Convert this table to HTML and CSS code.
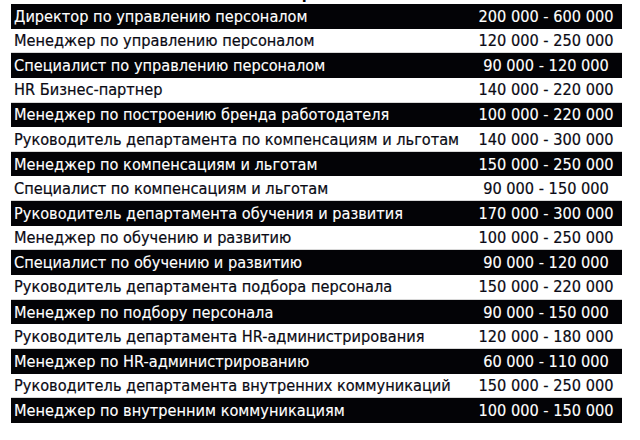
FILE: index.html
```html
<!DOCTYPE html>
<html lang="ru">
<head>
<meta charset="utf-8">
<link rel="stylesheet" href="styles.css">
</head>
<body>
<div class="page">
  <div class="title"><span>Заработная плата</span></div>
  <div class="table">
    <div class="row dark"><div class="name">Директор по управлению персоналом</div><div class="sum">200 000 - 600 000</div></div>
    <div class="row light"><div class="name">Менеджер по управлению персоналом</div><div class="sum">120 000 - 250 000</div></div>
    <div class="row dark"><div class="name">Специалист по управлению персоналом</div><div class="sum">90 000 - 120 000</div></div>
    <div class="row light"><div class="name">HR Бизнес-партнер</div><div class="sum">140 000 - 220 000</div></div>
    <div class="row dark"><div class="name">Менеджер по построению бренда работодателя</div><div class="sum">100 000 - 220 000</div></div>
    <div class="row light"><div class="name">Руководитель департамента по компенсациям и льготам</div><div class="sum">140 000 - 300 000</div></div>
    <div class="row dark"><div class="name">Менеджер по компенсациям и льготам</div><div class="sum">150 000 - 250 000</div></div>
    <div class="row light"><div class="name">Специалист по компенсациям и льготам</div><div class="sum">90 000 - 150 000</div></div>
    <div class="row dark"><div class="name">Руководитель департамента обучения и развития</div><div class="sum">170 000 - 300 000</div></div>
    <div class="row light"><div class="name">Менеджер по обучению и развитию</div><div class="sum">100 000 - 250 000</div></div>
    <div class="row dark"><div class="name">Специалист по обучению и развитию</div><div class="sum">90 000 - 120 000</div></div>
    <div class="row light"><div class="name">Руководитель департамента подбора персонала</div><div class="sum">150 000 - 220 000</div></div>
    <div class="row dark"><div class="name">Менеджер по подбору персонала</div><div class="sum">90 000 - 150 000</div></div>
    <div class="row light"><div class="name">Руководитель департамента HR-администрирования</div><div class="sum">120 000 - 180 000</div></div>
    <div class="row dark"><div class="name">Менеджер по HR-администрированию</div><div class="sum">60 000 - 110 000</div></div>
    <div class="row light"><div class="name">Руководитель департамента внутренних коммуникаций</div><div class="sum">150 000 - 250 000</div></div>
    <div class="row dark"><div class="name">Менеджер по внутренним коммуникациям</div><div class="sum">100 000 - 150 000</div></div>
  </div>
</div>
</body>
</html>
```
FILE: styles.css
```css
html, body {
  margin: 0;
  padding: 0;
  background: #ffffff;
}

.page {
  width: 640px;
  height: 440px;
  overflow: hidden;
  font-family: "DejaVu Sans Condensed", "DejaVu Sans", sans-serif;
  font-size: 16.2px;
  color: #000;
}

.title {
  height: 4px;
  overflow: hidden;
  display: flex;
  justify-content: center;
  padding-left: 74px;
}

.title span {
  display: block;
  margin-top: -15px;
  line-height: 18px;
  font-weight: bold;
  font-size: 16px;
  white-space: nowrap;
}

.table {
  margin-left: 11px;
  width: 611px;
  display: flex;
  flex-direction: column;
}

.row {
  height: 24.65px;
  display: flex;
  align-items: center;
  box-sizing: border-box;
}

.row.dark {
  background: #030306;
  color: #ffffff;
  -webkit-text-stroke: 0.12px currentColor;
}

.row.light {
  background: #ffffff;
  color: #0a0a14;
  border-bottom: 1px solid #d8d8d8;
  -webkit-text-stroke: 0.2px currentColor;
}

.name {
  flex: 1;
  padding-left: 3px;
  white-space: nowrap;
}

.sum {
  width: 152px;
  text-align: center;
  white-space: nowrap;
}
```
